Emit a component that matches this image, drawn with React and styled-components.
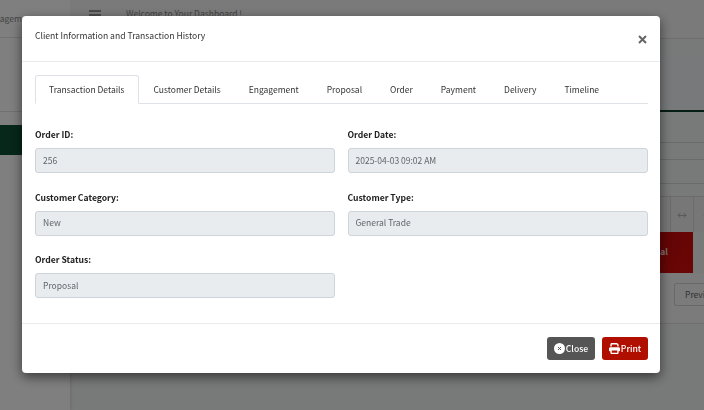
import React from "react";
import styled, { createGlobalStyle } from "styled-components";

const Global = createGlobalStyle`
  html, body { margin: 0; padding: 0; height: 100%; }
  body { font-family: "Noto Sans CJK SC", "Noto Sans", sans-serif; overflow: hidden; background: #fff; }
  * { box-sizing: border-box; }
`;

const Page = styled.div`
  display: flex;
  width: 704px;
  height: 410px;
  overflow: hidden;
  background: #f1f2f3;
`;

const Sidebar = styled.aside`
  width: 70px;
  flex: none;
  background: #fff;
  display: flex;
  flex-direction: column;
  box-shadow: 1px 0 3px rgba(0, 0, 0, 0.1);
`;

const SideItem = styled.div`
  height: 38px;
  padding-top: 12px;
  border-bottom: 1px solid #e2e2e2;
  font-size: 8.5px;
  line-height: 13px;
  color: #888;
  white-space: nowrap;
  text-indent: -15px;
`;

const SideSpacer = styled.div`
  height: 74px;
  border-bottom: 1px solid #e2e2e2;
`;

const SideActive = styled.div`
  height: 30px;
  margin-top: 13px;
  background: linear-gradient(90deg, #0d5034, #0b4a2e);
`;

const Main = styled.main`
  flex: 1;
  min-width: 0;
  display: flex;
  flex-direction: column;
`;

const TopBar = styled.header`
  height: 39px;
  flex: none;
  display: flex;
  align-items: flex-start;
  gap: 25px;
  padding: 8px 0 0 19px;
  background: #f4f4f4;
  border-bottom: 1px solid #dcdcdc;
`;

const Burger = styled.svg`
  width: 12px;
  height: 10px;
  flex: none;
  margin-top: 2px;
`;

const Welcome = styled.div`
  font-size: 8.5px;
  line-height: 11px;
  color: #888;
  white-space: nowrap;
`;

const Band = styled.div`
  height: 57px;
  flex: none;
  margin-top: 16px;
  background: #eef3f6;
  border-bottom: 2px solid #0b3a28;
`;

const Rows = styled.div`
  flex: none;
  display: flex;
  flex-direction: column;
`;

const Row = styled.div`
  height: ${(p) => p.$h}px;
  border-bottom: 1px solid #d4d4d4;
`;

const TableHead = styled.div`
  height: 35px;
  display: flex;
  justify-content: flex-end;
  background: #eeeeee;
`;

const HeadCell = styled.div`
  width: ${(p) => p.$w}px;
  flex: none;
  display: flex;
  align-items: center;
  justify-content: flex-start;
  padding-left: ${(p) => p.$pad}px;
  overflow: hidden;
  border-left: 1px solid #d8d8d8;
  color: #aaa;
  font-size: 10px;
`;

const RedRow = styled.div`
  display: flex;
  height: 41px;
  justify-content: flex-end;
`;

const RedCell = styled.div`
  width: 80px;
  margin-right: 11px;
  padding: 0 25px 4px 0;
  display: flex;
  align-items: center;
  justify-content: flex-end;
  background: linear-gradient(120deg, #b00606, #d80c0c);
  color: #f3dcdc;
  font-size: 8.5px;
  font-weight: 700;
`;

const Pager = styled.div`
  display: flex;
  justify-content: flex-end;
  height: 51px;
  padding-top: 10px;
  border-bottom: 1px solid #dedede;
  background: #f6f6f6;
`;

const PagerButton = styled.div`
  width: 30px;
  height: 23px;
  padding: 0 0 1px 10px;
  display: flex;
  align-items: center;
  overflow: hidden;
  border: 1px solid #d3d3d3;
  border-right: 0;
  border-radius: 3px 0 0 3px;
  font-size: 8.5px;
  color: #666;
`;

const Backdrop = styled.div`
  position: fixed;
  inset: 0;
  background: rgba(0, 0, 0, 0.5);
`;

const Modal = styled.div`
  position: fixed;
  left: 22px;
  top: 16px;
  width: 638px;
  height: 357px;
  display: flex;
  flex-direction: column;
  background: #fff;
  border-radius: 4px;
  box-shadow: 0 4px 12px rgba(0, 0, 0, 0.55);
  color: #333;
`;

const ModalHeader = styled.div`
  height: 46px;
  flex: none;
  display: flex;
  align-items: flex-start;
  justify-content: space-between;
  padding: 13px 13px 0;
  border-bottom: 1px solid #e9ecef;
`;

const Title = styled.div`
  font-size: 8.6px;
  line-height: 13px;
  color: #333;
`;

const CloseIcon = styled.svg`
  width: 9px;
  height: 9px;
  margin-top: 6px;
`;

const ModalBody = styled.div`
  flex: 1;
  padding: 13px 12px 0 13px;
`;

const Tabs = styled.div`
  display: flex;
  height: 29px;
  border-bottom: 1px solid #dee2e6;
`;

const Tab = styled.div`
  height: 29px;
  padding: 0 14px 2px;
  display: flex;
  align-items: center;
  font-size: 8.5px;
  white-space: nowrap;
  color: #333;
  ${(p) =>
    p.$active &&
    `
    background: #fff;
    border: 1px solid #dee2e6;
    border-bottom-color: #fff;
    border-radius: 3px 3px 0 0;
    padding: 0 14px 2px 13px;
  `}
`;

const Form = styled.div`
  display: grid;
  grid-template-columns: 300px 300px;
  column-gap: 12.5px;
  row-gap: 17.5px;
  margin-top: 24px;
`;

const Field = styled.div`
  display: flex;
  flex-direction: column;
`;

const Label = styled.label`
  font-size: 8.6px;
  line-height: 12px;
  font-weight: 700;
  color: #222;
  margin-bottom: 8px;
`;

const Value = styled.div`
  height: 25px;
  padding: 0 7px 2px;
  display: flex;
  align-items: center;
  font-size: 8.5px;
  color: #5f656b;
  background: #e9ecef;
  border: 1px solid #ced4da;
  border-radius: 3px;
`;

const ModalFooter = styled.div`
  height: 50px;
  flex: none;
  display: flex;
  justify-content: flex-end;
  align-items: flex-start;
  gap: 7px;
  padding: 13px 12px 0 0;
  border-top: 1px solid #e9ecef;
`;

const Button = styled.button`
  height: 23px;
  width: ${(p) => p.$w}px;
  padding: 0 0 1px;
  display: flex;
  align-items: center;
  justify-content: center;
  gap: 1px;
  font-family: inherit;
  font-size: 8.6px;
  font-weight: 500;
  color: #fff;
  background: ${(p) => p.$bg};
  border: 0;
  border-radius: 3px;
`;

const fields = [
  ["Order ID:", "256"],
  ["Order Date:", "2025-04-03 09:02 AM"],
  ["Customer Category:", "New"],
  ["Customer Type:", "General Trade"],
  ["Order Status:", "Proposal"],
];

const tabs = ["Transaction Details", "Customer Details", "Engagement", "Proposal", "Order", "Payment", "Delivery", "Timeline"];

export default function App() {
  return (
    <>
      <Global />
      <Page>
        <Sidebar>
          <SideItem>Engagement</SideItem>
          <SideSpacer />
          <SideActive />
        </Sidebar>
        <Main>
          <TopBar>
            <Burger viewBox="0 0 12 10">
              <path d="M0 1h12M0 5h12M0 9h12" stroke="#777" strokeWidth="1.5" />
            </Burger>
            <Welcome>Welcome to Your Dashboard !</Welcome>
          </TopBar>
          <Band />
          <Rows>
            <Row $h={31} />
            <Row $h={17} />
            <Row $h={24} />
            <Row $h={13} />
          </Rows>
          <TableHead>
            <HeadCell $w={23} $pad={6}>↔</HeadCell>
            <HeadCell $w={11} $pad={9}>↔</HeadCell>
          </TableHead>
          <RedRow>
            <RedCell>Proposal</RedCell>
          </RedRow>
          <Pager>
            <PagerButton>Previous</PagerButton>
          </Pager>
        </Main>
      </Page>
      <Backdrop />
      <Modal>
        <ModalHeader>
          <Title>Client Information and Transaction History</Title>
          <CloseIcon viewBox="0 0 9 9">
            <path d="M1 1l7 7M8 1l-7 7" stroke="#666" strokeWidth="2" />
          </CloseIcon>
        </ModalHeader>
        <ModalBody>
          <Tabs>
            {tabs.map((t, i) => (
              <Tab key={t} $active={i === 0}>
                {t}
              </Tab>
            ))}
          </Tabs>
          <Form>
            {fields.map(([l, v]) => (
              <Field key={l}>
                <Label>{l}</Label>
                <Value>{v}</Value>
              </Field>
            ))}
          </Form>
        </ModalBody>
        <ModalFooter>
          <Button $w={48} $bg="#555555">
            <svg width="11" height="11" viewBox="0 0 11 11">
              <circle cx="5.5" cy="5.5" r="5.5" fill="#fff" />
              <path d="M4 4l3 3M7 4l-3 3" stroke="#555" strokeWidth="1" />
            </svg>
            Close
          </Button>
          <Button $w={46} $bg="#b00f00">
            <svg width="11" height="11" viewBox="0 0 512 512" fill="#fff">
              <path d="M128 0C92.700 0 64 28.700 64 64v96h64V64h226.700L384 93.300V160h64V93.300c0-17-6.700-33.300-18.700-45.300L400 18.700C388 6.700 371.700 0 354.700 0H128zM384 352v96H128v-96h256zm64 32h32c17.700 0 32-14.300 32-32v-96c0-35.300-28.700-64-64-64H64c-35.300 0-64 28.700-64 64v96c0 17.700 14.300 32 32 32h32v64c0 35.300 28.700 64 64 64h256c35.300 0 64-28.700 64-64v-64z" />
            </svg>
            Print
          </Button>
        </ModalFooter>
      </Modal>
    </>
  );
}
